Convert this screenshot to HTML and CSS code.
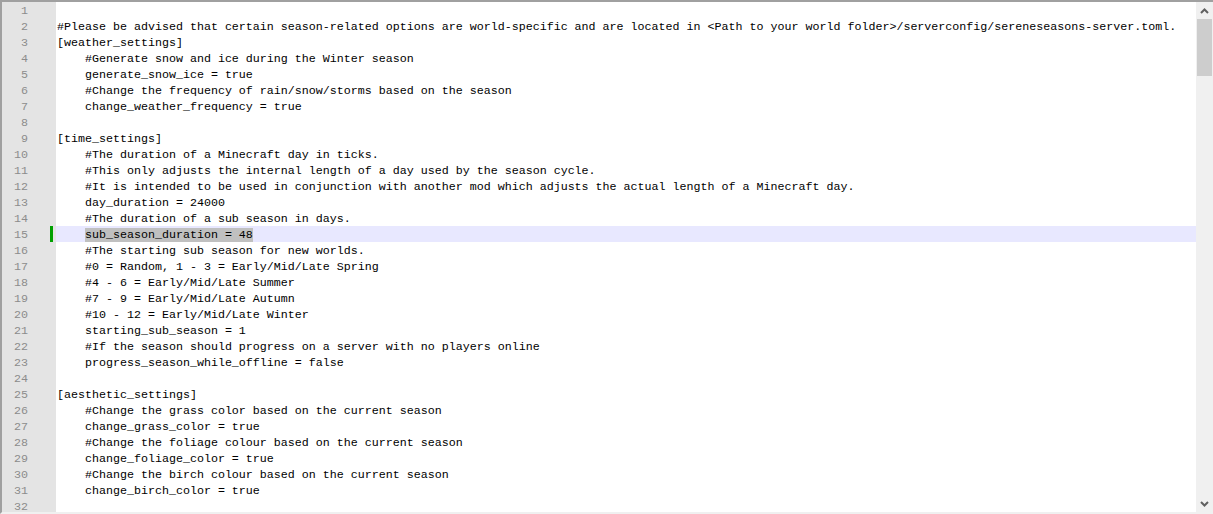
FILE: index.html
```html
<!DOCTYPE html>
<html>
<head>
<meta charset="utf-8">
<link rel="stylesheet" href="styles.css">
</head>
<body>
<div class="editor">
  <div class="lines">
    <div class="line"><span class="num">1</span><span class="mark"></span><span class="code"></span></div>
    <div class="line"><span class="num">2</span><span class="mark"></span><span class="code">#Please be advised that certain season-related options are world-specific and are located in &lt;Path to your world folder&gt;/serverconfig/sereneseasons-server.toml.</span></div>
    <div class="line"><span class="num">3</span><span class="mark"></span><span class="code">[weather_settings]</span></div>
    <div class="line"><span class="num">4</span><span class="mark"></span><span class="code">    #Generate snow and ice during the Winter season</span></div>
    <div class="line"><span class="num">5</span><span class="mark"></span><span class="code">    generate_snow_ice = true</span></div>
    <div class="line"><span class="num">6</span><span class="mark"></span><span class="code">    #Change the frequency of rain/snow/storms based on the season</span></div>
    <div class="line"><span class="num">7</span><span class="mark"></span><span class="code">    change_weather_frequency = true</span></div>
    <div class="line"><span class="num">8</span><span class="mark"></span><span class="code"></span></div>
    <div class="line"><span class="num">9</span><span class="mark"></span><span class="code">[time_settings]</span></div>
    <div class="line"><span class="num">10</span><span class="mark"></span><span class="code">    #The duration of a Minecraft day in ticks.</span></div>
    <div class="line"><span class="num">11</span><span class="mark"></span><span class="code">    #This only adjusts the internal length of a day used by the season cycle.</span></div>
    <div class="line"><span class="num">12</span><span class="mark"></span><span class="code">    #It is intended to be used in conjunction with another mod which adjusts the actual length of a Minecraft day.</span></div>
    <div class="line"><span class="num">13</span><span class="mark"></span><span class="code">    day_duration = 24000</span></div>
    <div class="line"><span class="num">14</span><span class="mark"></span><span class="code">    #The duration of a sub season in days.</span></div>
    <div class="line current"><span class="num">15</span><span class="mark"><i class="changed"></i></span><span class="code">    <span class="sel">sub_season_duration = 48</span></span></div>
    <div class="line"><span class="num">16</span><span class="mark"></span><span class="code">    #The starting sub season for new worlds.</span></div>
    <div class="line"><span class="num">17</span><span class="mark"></span><span class="code">    #0 = Random, 1 - 3 = Early/Mid/Late Spring</span></div>
    <div class="line"><span class="num">18</span><span class="mark"></span><span class="code">    #4 - 6 = Early/Mid/Late Summer</span></div>
    <div class="line"><span class="num">19</span><span class="mark"></span><span class="code">    #7 - 9 = Early/Mid/Late Autumn</span></div>
    <div class="line"><span class="num">20</span><span class="mark"></span><span class="code">    #10 - 12 = Early/Mid/Late Winter</span></div>
    <div class="line"><span class="num">21</span><span class="mark"></span><span class="code">    starting_sub_season = 1</span></div>
    <div class="line"><span class="num">22</span><span class="mark"></span><span class="code">    #If the season should progress on a server with no players online</span></div>
    <div class="line"><span class="num">23</span><span class="mark"></span><span class="code">    progress_season_while_offline = false</span></div>
    <div class="line"><span class="num">24</span><span class="mark"></span><span class="code"></span></div>
    <div class="line"><span class="num">25</span><span class="mark"></span><span class="code">[aesthetic_settings]</span></div>
    <div class="line"><span class="num">26</span><span class="mark"></span><span class="code">    #Change the grass color based on the current season</span></div>
    <div class="line"><span class="num">27</span><span class="mark"></span><span class="code">    change_grass_color = true</span></div>
    <div class="line"><span class="num">28</span><span class="mark"></span><span class="code">    #Change the foliage colour based on the current season</span></div>
    <div class="line"><span class="num">29</span><span class="mark"></span><span class="code">    change_foliage_color = true</span></div>
    <div class="line"><span class="num">30</span><span class="mark"></span><span class="code">    #Change the birch colour based on the current season</span></div>
    <div class="line"><span class="num">31</span><span class="mark"></span><span class="code">    change_birch_color = true</span></div>
    <div class="line"><span class="num">32</span><span class="mark"></span><span class="code"></span></div>
  </div>
  <div class="scrollbar">
    <div class="arrow"><svg width="9" height="6" viewBox="0 0 9 6"><polyline points="1,5 4.5,1.5 8,5" fill="none" stroke="#606060" stroke-width="2"/></svg></div>
    <div class="track"><div class="thumb"></div></div>
    <div class="arrow"><svg width="9" height="6" viewBox="0 0 9 6"><polyline points="1,1 4.5,4.5 8,1" fill="none" stroke="#606060" stroke-width="2"/></svg></div>
  </div>
</div>
</body>
</html>
```
FILE: styles.css
```css
html, body {
  margin: 0;
  padding: 0;
  background: #ffffff;
}
.editor {
  width: 1213px;
  height: 514px;
  box-sizing: border-box;
  border-top: 2px solid #a0a0a0;
  border-left: 2px solid #a0a0a0;
  border-bottom: 2px solid #f0f0f0;
  display: flex;
  overflow: hidden;
}
.lines {
  flex: 1;
  display: flex;
  flex-direction: column;
  overflow: hidden;
  font-family: "Liberation Mono", "Courier New", monospace;
  font-size: 11.667px;
  line-height: 14px;
  color: #000000;
}
.line {
  display: grid;
  grid-template-columns: 31px 23px 1fr;
  height: 16px;
  flex: none;
}
.num {
  background: #e4e4e4;
  color: #8c8c8c;
  text-align: right;
  padding: 2px 5px 0 0;
}
.mark {
  background: #e4e4e4;
  position: relative;
}
.changed {
  position: absolute;
  left: 17px;
  top: 0;
  width: 3px;
  height: 16px;
  background: #00a000;
}
.code {
  white-space: pre;
  padding: 2px 0 0 1px;
  background: #ffffff;
}
.current .code {
  background: #e8e8ff;
}
.sel {
  background: #c0c0c0;
}
.scrollbar {
  width: 17px;
  flex: none;
  background: #f0f0f0;
  display: flex;
  flex-direction: column;
}
.arrow {
  height: 17px;
  display: flex;
  align-items: center;
  justify-content: center;
}
.track {
  flex: 1;
  padding: 0 1px 0 1px;
}
.thumb {
  height: 57px;
  background: #cdcdcd;
}
```
